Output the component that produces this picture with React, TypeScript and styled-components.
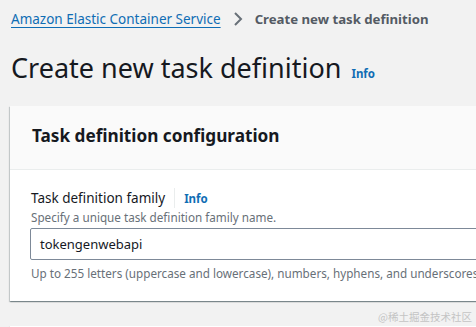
import React from 'react'
import styled, { createGlobalStyle } from 'styled-components'

const colors = {
  page: '#f2f2f2',
  link: '#0f6db4',
  text: '#16191f',
  muted: '#545b64',
  hint: '#687078',
  border: '#eaeded',
}

const GlobalStyle = createGlobalStyle`
  html, body {
    margin: 0;
    padding: 0;
    background: ${colors.page};
    overflow: hidden;
  }
  body {
    font-family: 'Noto Sans', 'Open Sans', sans-serif;
    color: ${colors.text};
  }
`

const Stage = styled.div`
  position: relative;
  width: 476px;
  height: 327px;
  overflow: hidden;
`

const Page = styled.div`
  width: 620px;
  padding: 0 0 0 10px;
  box-sizing: border-box;
`

const Breadcrumbs = styled.nav`
  display: flex;
  align-items: center;
  gap: 12px;
  height: 38px;
  padding-left: 1px;
  font-size: 13.5px;
`

const CrumbLink = styled.a`
  color: ${colors.link};
  text-decoration: underline;
  text-underline-offset: 3px;
`

const Chevron = styled.svg`
  width: 10px;
  height: 14px;
`

const CrumbCurrent = styled.span`
  color: ${colors.muted};
  font-weight: 700;
  font-size: 13.2px;
`

const TitleRow = styled.div`
  display: flex;
  align-items: baseline;
  gap: 10px;
  height: 68px;
  padding: 10px 0 0 1px;
  box-sizing: border-box;
`

const Title = styled.h1`
  margin: 0;
  font-size: 27px;
  font-weight: 400;
  line-height: 40px;
  color: ${colors.text};
`

const InfoLink = styled.a`
  color: ${colors.link};
  font-weight: 700;
  font-size: 11.5px;
`

const Card = styled.section`
  background: #fff;
  box-shadow: 0 1px 1px 0 rgba(0, 28, 36, 0.3), 1px 1px 1px 0 rgba(0, 28, 36, 0.15),
    -1px 1px 1px 0 rgba(0, 28, 36, 0.15);
  margin-bottom: 25px;
`

const CardHeader = styled.header`
  background: #fafafa;
  border-bottom: 1px solid ${colors.border};
  height: 64px;
  box-sizing: border-box;
  padding: 0 22px 4px;
  display: flex;
  align-items: center;
`

const CardTitle = styled.h2`
  margin: 0;
  font-size: 17.2px;
  font-weight: 700;
  color: ${colors.text};
`

const CardBody = styled.div`
  padding: 17px 20px 20px 21px;
`

const LabelRow = styled.div`
  display: flex;
  align-items: center;
  height: 22px;
`

const Label = styled.label`
  font-size: 13.5px;
  color: ${colors.text};
  padding-right: 9px;
  border-right: 1px solid ${colors.border};
  line-height: 20px;
`

const LabelInfo = styled(InfoLink)`
  padding-left: 9px;
`

const Hint = styled.div`
  font-size: 11.7px;
  color: ${colors.hint};
  line-height: 16px;
  white-space: nowrap;
`

const Input = styled.div`
  margin: 3px 0 5px -1px;
  height: 32px;
  box-sizing: border-box;
  border: 1px solid #7d8998;
  border-radius: 2px;
  display: flex;
  align-items: center;
  padding-left: 9px;
  font-size: 13px;
  color: ${colors.text};
`

const NextCard = styled(Card)`
  height: 40px;
`

const Watermark = styled.div`
  position: absolute;
  right: 4px;
  bottom: 3px;
  font-family: 'Noto Sans CJK SC', sans-serif;
  font-size: 10.5px;
  color: #c4c4c4;
`

export default function App() {
  return (
    <Stage>
      <GlobalStyle />
      <Page>
        <Breadcrumbs>
          <CrumbLink>Amazon Elastic Container Service</CrumbLink>
          <Chevron viewBox="0 0 10 14">
            <path d="M2 1 L8 7 L2 13" fill="none" stroke="#687078" strokeWidth="2" />
          </Chevron>
          <CrumbCurrent>Create new task definition</CrumbCurrent>
        </Breadcrumbs>
        <TitleRow>
          <Title>Create new task definition</Title>
          <InfoLink>Info</InfoLink>
        </TitleRow>
        <Card>
          <CardHeader>
            <CardTitle>Task definition configuration</CardTitle>
          </CardHeader>
          <CardBody>
            <LabelRow>
              <Label>Task definition family</Label>
              <LabelInfo>Info</LabelInfo>
            </LabelRow>
            <Hint>Specify a unique task definition family name.</Hint>
            <Input>tokengenwebapi</Input>
            <Hint>
              Up to 255 letters (uppercase and lowercase), numbers, hyphens, and underscores are
              allowed.
            </Hint>
          </CardBody>
        </Card>
        <NextCard />
      </Page>
      <Watermark>@稀土掘金技术社区</Watermark>
    </Stage>
  )
}
